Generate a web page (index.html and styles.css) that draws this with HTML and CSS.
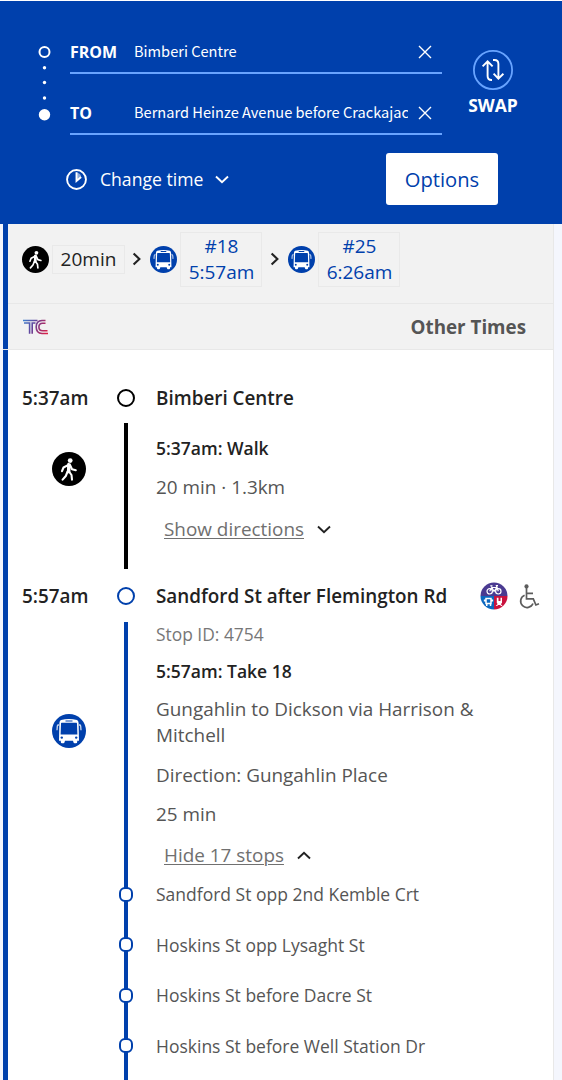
FILE: index.html
```html
<!DOCTYPE html>
<html lang="en">
<head>
<meta charset="utf-8">
<title>Journey planner</title>
<link rel="stylesheet" href="styles.css">
</head>
<body>
<svg class="defs" width="0" height="0">
  <symbol id="walk" viewBox="0 0 34 34">
    <circle cx="17" cy="17" r="17" fill="#000"/>
    <circle cx="18.2" cy="8.6" r="2.4" fill="#fff"/>
    <path d="M16.6 11.8 L16 20.5 M16.5 12.8 L11.5 15.5 L10 19.2 M18 13 L20 17.2 L23.8 18.2 M15.6 19.5 L13.8 24 L10.6 27.6 M17 19.5 L19.5 23 L20 27.6" fill="none" stroke="#fff" stroke-width="2.1" stroke-linecap="round" stroke-linejoin="round"/>
    <path d="M15.4 11.4 H18.6 L18.4 20.4 H14.8 Z" fill="#fff"/>
  </symbol>
  <symbol id="bus" viewBox="0 0 34 34">
    <circle cx="17" cy="17" r="17" fill="#0040ac"/>
    <path d="M9 6 Q17 4.2 25 6 Q26.4 6.6 26.6 9 L27 26.8 H25.2 V28 Q25.2 29.2 24 29.2 H22.6 Q21.6 29.2 21.4 28 L21 26.8 H13 L12.6 28 Q12.4 29.2 11.4 29.2 H10 Q8.8 29.2 8.8 28 V26.8 H7 L7.4 9 Q7.6 6.6 9 6 Z" fill="#fff"/>
    <path d="M9.6 8.8 H24.4 Q25 8.8 25 9.8 L25.4 20.4 H8.6 L9 9.8 Q9 8.8 9.6 8.8 Z M13.5 6.4 H20.5 V7.5 H13.5 Z" fill="#0040ac"/>
    <circle cx="9.8" cy="23.6" r="1.2" fill="#0040ac"/><circle cx="24.2" cy="23.6" r="1.2" fill="#0040ac"/>
    <path d="M7 11 H6 Q5.4 11 5.3 12.4 L5 16.2 M27 11 H28 Q28.6 11 28.7 12.4 L29 16.2" fill="none" stroke="#fff" stroke-opacity=".8" stroke-width="1.3"/>
  </symbol>
  <symbol id="cross" viewBox="0 0 14 14"><path d="M1 1 L13 13 M13 1 L1 13" fill="none" stroke="#fff" stroke-width="1.4"/></symbol>
  <symbol id="right" viewBox="0 0 10 14"><path d="M1.6 1.4 L7.4 7 L1.6 12.6" fill="none" stroke="#222" stroke-width="2.1"/></symbol>
  <symbol id="down" viewBox="0 0 14 9"><path d="M1 1.5 L7 7.3 L13 1.5" fill="none" stroke="currentColor" stroke-width="1.9"/></symbol>
</svg>

<header class="search">
  <svg class="route-dots" width="14" height="78" viewBox="0 0 14 78">
    <circle cx="7.5" cy="8" r="5" fill="none" stroke="#fff" stroke-width="2"/>
    <circle cx="7.5" cy="23.8" r="1.7" fill="#fff"/><circle cx="7.5" cy="38.5" r="1.7" fill="#fff"/><circle cx="7.5" cy="54" r="1.7" fill="#fff"/>
    <circle cx="7.5" cy="70.8" r="5.7" fill="#fff"/>
  </svg>
  <div class="fields">
    <div class="field"><span class="label">FROM</span><span class="value">Bimberi Centre</span><svg class="clear" width="14" height="14"><use href="#cross"/></svg></div>
    <div class="field"><span class="label">TO</span><span class="value">Bernard Heinze Avenue before Crackajac</span><svg class="clear" width="14" height="14"><use href="#cross"/></svg></div>
  </div>
  <div class="swap">
    <svg width="40" height="40" viewBox="0 0 40 40" fill="none">
      <circle cx="20" cy="20" r="19.1" stroke="#68a4ff" stroke-width="1.8"/>
      <g stroke="#fff" stroke-width="1.9"><path d="M19 30 H18.5 Q14.6 30 14.6 26 V11.5 M9.6 16.3 L14.6 11.3 L19.6 16.3"/><path d="M20 10 H21.5 Q25.4 10 25.4 14 V28.5 M20.6 23.7 L25.4 28.6 L30.4 23.7"/></g>
    </svg>
    <span>SWAP</span>
  </div>
  <div class="actions">
    <svg width="21" height="21" viewBox="0 0 20 20"><circle cx="10" cy="10" r="9" fill="none" stroke="#fff" stroke-width="1.8"/><path d="M10 3.4 Q13.4 4 14.4 7 L10 11.5 Z" fill="#fff" fill-opacity=".55"/><path d="M10 3 V11.3 L14.4 7.6" fill="none" stroke="#fff" stroke-width="1.8"/></svg>
    <span class="change">Change time</span>
    <svg width="14" height="9"><use href="#down"/></svg>
    <button class="options">Options</button>
  </div>
</header>

<main class="panel">
  <div class="summary">
    <svg class="mode" width="27" height="27"><use href="#walk"/></svg>
    <span class="chip walk-chip">20min</span>
    <svg class="next" width="10" height="14"><use href="#right"/></svg>
    <svg class="mode" width="27" height="27"><use href="#bus"/></svg>
    <span class="chip bus-chip">#18<br>5:57am</span>
    <svg class="next" width="10" height="14"><use href="#right"/></svg>
    <svg class="mode" width="27" height="27"><use href="#bus"/></svg>
    <span class="chip bus-chip">#25<br>6:26am</span>
  </div>
  <div class="operator">
    <svg width="26" height="16" viewBox="0 0 26 16" fill="none">
      <defs><linearGradient id="tc" gradientUnits="userSpaceOnUse" x1="0" y1="0" x2="25" y2="12"><stop offset="0" stop-color="#3c86d2"/><stop offset=".45" stop-color="#63429a"/><stop offset="1" stop-color="#dc1f45"/></linearGradient></defs>
      <g stroke="url(#tc)" stroke-width="1.6"><path d="M0 1.5 H14.5 M1 4 H6.6 V14.7 M9.2 14.7 V4 H12.5"/><path d="M22.5 1.5 H19 Q13.2 1.8 13.2 8 Q13.2 14.2 19 14.5 H25"/><path d="M22.5 4.2 H19.5 Q15.9 4.2 15.9 8 Q15.9 11.8 19.5 11.8 H24.5"/></g>
    </svg>
    <span>Other Times</span>
  </div>

  <section class="leg walk-leg">
    <div class="time">5:37am</div><div class="origin"></div><h2>Bimberi Centre</h2>
    <svg class="leg-icon" width="34" height="34"><use href="#walk"/></svg>
    <div class="track"></div>
    <div class="details">
      <p class="step">5:37am: Walk</p>
      <p class="duration">20 min · 1.3km</p>
      <p class="toggle"><a>Show directions</a><svg width="14" height="9"><use href="#down"/></svg></p>
    </div>
  </section>

  <section class="leg bus-leg">
    <div class="time">5:57am</div><div class="origin"></div>
    <h2>Sandford St after Flemington Rd
      <span class="facilities">
        <svg width="28" height="28" viewBox="0 0 28 28">
          <path d="M.5 14 A13.5 13.5 0 0 1 27.5 14 Z" fill="#4a3a91"/><path d="M.5 14 A13.5 13.5 0 0 0 14 27.5 V14 Z" fill="#0b67bf"/><path d="M27.5 14 A13.5 13.5 0 0 1 14 27.5 V14 Z" fill="#c9123e"/>
          <g fill="none" stroke="#fff" stroke-width="1.2"><circle cx="9.7" cy="9.3" r="2.7"/><circle cx="18.3" cy="9.3" r="2.7"/><path d="M9.7 9.3 L11.8 5.5 L14 9.3 L16.8 5.5 H11.8 M18.3 9.3 L16.4 3.7 H18 M10.3 3.8 H12.5"/><path d="M6 16.5 H11 V21.5 H6 Z M4.6 17.5 V19.5 M12.4 17.5 V19.5" stroke-width="1.5"/></g>
          <path d="M6 22 H7.5 V24 H6 Z M9.8 22 H11.3 V24 H9.8 Z M16.8 15.8 H18.5 V19 H20.5 V15.8 H22 V21 L20.8 22 L22.5 24 H21 L20.2 23 H18 L17.2 24 H15.7 L17.7 22 L16.8 21 Z" fill="#fff"/>
        </svg>
        <svg width="21" height="26" viewBox="0 0 21 26" fill="none" stroke="#5c5c5c" stroke-width="1.7"><circle cx="7.5" cy="3.4" r="2.1" fill="#5c5c5c" stroke="none"/><path d="M7.5 5 V15.8 H14.3 L16.9 22 L20 20.8 M7.5 10.3 H14 M5.6 12.2 A6.4 6.4 0 1 0 14 20.5"/></svg>
      </span>
    </h2>
    <svg class="leg-icon" width="34" height="34"><use href="#bus"/></svg>
    <div class="track"></div>
    <div class="details">
      <p class="stop-id">Stop ID: 4754</p>
      <p class="step">5:57am: Take 18</p>
      <p class="service">Gungahlin to Dickson via Harrison &amp; Mitchell</p>
      <p class="direction">Direction: Gungahlin Place</p>
      <p class="duration">25 min</p>
      <p class="toggle open"><a>Hide 17 stops</a><svg width="14" height="9"><use href="#down"/></svg></p>
      <ul class="stops">
        <li>Sandford St opp 2nd Kemble Crt</li>
        <li>Hoskins St opp Lysaght St</li>
        <li>Hoskins St before Dacre St</li>
        <li>Hoskins St before Well Station Dr</li>
      </ul>
    </div>
  </section>
</main>
</body>
</html>
```
FILE: styles.css
```css
*, *::before { box-sizing: border-box; }
html, body { height: 1080px; overflow: hidden; }
body { margin: 0; padding-top: 1px; background: #f4f6fd; font-family: "Open Sans", sans-serif; font-size: 18.9px; color: #555; }
p, h2, ul { margin: 0; padding: 0; }
.defs { position: absolute; }

.search { height: 223px; background: #0040ac; color: #fff; display: grid; grid-template-columns: 33px 372px 102px; grid-template-rows: 152px 52px; padding-left: 37px; box-shadow: 0 -1px #fff; }
.route-dots { margin-top: 43px; }
.fields { padding-top: 30px; }
.field { height: 43px; display: flex; align-items: center; border-bottom: 2px solid #68a4ff; }
.field + .field { margin-top: 18px; }
.label { width: 64px; font-size: 16px; font-weight: 700; line-height: 22px; }
.value { width: 274px; margin-top: -3px; font-family: "Noto Sans CJK SC", sans-serif; font-size: 14.6px; white-space: nowrap; overflow: hidden; }
.clear { margin-left: 10px; }
.swap { display: flex; flex-direction: column; align-items: center; padding-top: 49px; font-size: 17.5px; font-weight: 700; line-height: 31px; }
.actions { grid-column: 1 / 4; display: flex; align-items: center; padding-left: 29px; }
.change { width: 103px; margin: 0 12px 0 13px; font-size: 17.6px; white-space: nowrap; }
.options { margin-left: 157px; width: 112px; height: 52px; border: 0; border-radius: 3px; background: #fff; color: #0040ac; font: 20.2px "Open Sans", sans-serif; }

.panel { width: 551px; height: 856px; margin-left: 3px; border-left: 5px solid #0040ac; border-right: 1px solid #e8e8e8; background: #fff; box-shadow: -3px 0 #f4f6fd; }
.summary { height: 80px; display: flex; padding: 8px 0 0 14px; background: #f2f2f2; border-bottom: 1px solid #e8e8e8; }
.mode { margin-top: 14px; flex: none; }
.chip { border: 1px solid #e9e9e9; font-size: 19px; line-height: 26px; text-align: center; }
.walk-chip { width: 73px; height: 29px; margin: 13px 7px 0 3px; color: #222; }
.bus-chip { width: 82px; height: 55px; margin: 0 8px 0 3px; padding-left: 1px; color: #0040ac; }
.next { margin: 20px 8px 0 0; }
.operator { height: 46px; display: flex; justify-content: space-between; align-items: center; margin-left: -5px; padding: 0 27px 0 20px; background: linear-gradient(90deg, #0040ac 5px, #f2f2f2 5px); border-bottom: 1px solid #e8e8e8; font-size: 18.8px; font-weight: 700; }

.leg { display: grid; grid-template-columns: 102px 32px 1fr; grid-template-rows: 28px auto; row-gap: 11px; }
.walk-leg { --line: #000; padding-top: 34px; }
.bus-leg { --line: #0040ac; padding-top: 14px; }
.time { padding-left: 14px; font-size: 18.85px; font-weight: 550; line-height: 28px; color: #222; }
.origin { width: 18px; height: 18px; margin: 5px 7px; border: 2px solid var(--line); border-radius: 50%; }
.bus-leg .origin { margin-top: 4px; }
h2 { margin-left: 14px; padding-right: 13px; font-size: 18.85px; line-height: 28px; font-weight: 550; color: #222; display: flex; justify-content: space-between; white-space: nowrap; }
.bus-leg .time, .bus-leg h2 { line-height: 27px; }
.facilities { display: flex; gap: 11px; align-items: center; height: 26px; }
.leg-icon { margin: 29px 0 0 44px; }
.bus-leg .leg-icon { margin-top: 92px; }
.track { width: 4px; margin-left: 14px; background: var(--line); }
.details { padding-left: 14px; line-height: 26px; }
.walk-leg .details { height: 146px; padding-top: 13px; }
.step { font-size: 17.5px; font-weight: 550; color: #222; }
.walk-leg .step { margin-top: -1px; }
.walk-leg .duration { margin-top: 13px; }
.toggle { display: flex; align-items: center; gap: 13px; margin: 16px 0 0 8px; color: #222; }
.toggle a { color: #707070; text-decoration: underline; text-decoration-thickness: 1px; text-underline-offset: 2px; }
.stop-id { font-size: 17.4px; line-height: 24px; color: #777; }
.bus-leg .step { margin-top: 13px; line-height: 24px; }
.service { width: 340px; margin-top: 13px; }
.direction { margin-top: 14px; }
.bus-leg .duration { margin-top: 13px; }
.open { margin-top: 15px; }
.open svg { transform: rotate(180deg); }
.stops { list-style: none; padding: 1px 0 20px; }
.stops li { position: relative; height: 50.5px; line-height: 50px; font-size: 17.5px; }
.stops li::before { content: ""; position: absolute; left: -37px; top: 17.6px; width: 14px; height: 15px; border: 2px solid #0040ac; border-radius: 6px; background: #fff; }
```
